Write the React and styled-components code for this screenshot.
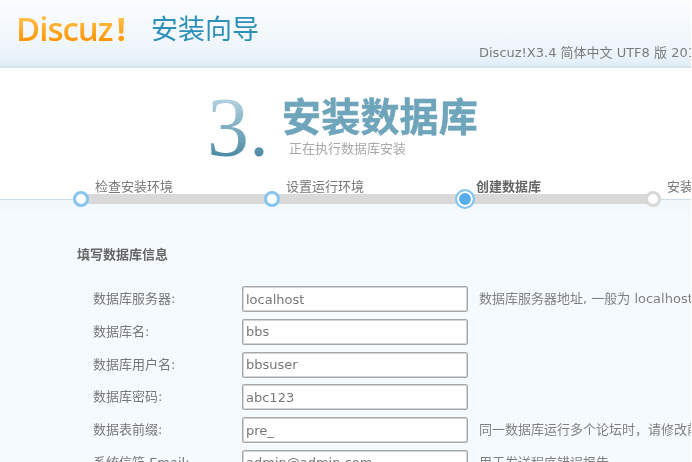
import styled, { createGlobalStyle } from "styled-components";

const GlobalStyle = createGlobalStyle`
  html, body {
    margin: 0;
    padding: 0;
    background: #fff;
  }
`;

const FONT = `"DejaVu Sans", "Noto Sans CJK SC", sans-serif`;
const CJK = `"Noto Sans CJK SC", sans-serif`;

const Page = styled.div`
  width: 691px;
  height: 462px;
  overflow: hidden;
  font-family: ${FONT};
  font-size: 13px;
  color: #777;
  background: #f5faff;
  filter: blur(0.4px);
`;

const Header = styled.header`
  height: 68px;
  box-sizing: border-box;
  display: flex;
  align-items: flex-start;
  white-space: nowrap;
  background: linear-gradient(#fbfdff 0%, #f3f8fd 50%, #ebf3fa 85%, #e0edf6 100%);
  border-bottom: 2px solid #d5e4ec;
`;

const Logo = styled.div`
  display: flex;
  width: 111px;
  flex: none;
  margin: 8px 0 0 16px;
  font-family: "Open Sans", Arial, sans-serif;
  font-weight: 600;
  font-size: 33px;
  line-height: 42px;
  letter-spacing: -1px;
  color: transparent;
  background: linear-gradient(#ffc14a 20%, #ff9400 80%);
  -webkit-background-clip: text;
  background-clip: text;
`;

const LogoBang = styled.span`
  margin-left: 4px;
  font-weight: 700;
`;

const LogoDivider = styled.div`
  width: 1px;
  height: 28px;
  margin: 14px 12px 0 12px;
  background: #dde5ea;
`;

const WizardName = styled.div`
  margin-top: 8px;
  font-family: ${CJK};
  font-size: 27px;
  line-height: 40px;
  color: #2c90b9;
`;

const Version = styled.div`
  margin: 44px 0 0 220px;
  font-size: 13px;
  line-height: 18px;
  color: #7b7b7b;
`;

const Hero = styled.section`
  height: 100px;
  box-sizing: border-box;
  display: flex;
  padding: 18px 0 0 207px;
  background: #fff;
`;

const StepNumber = styled.div`
  width: 75px;
  flex: none;
  font-family: "Liberation Serif", "Times New Roman", serif;
  font-size: 84px;
  line-height: 84px;
  color: transparent;
  background: linear-gradient(#b5d3e0 15%, #4f8ba5 85%);
  -webkit-background-clip: text;
  background-clip: text;
`;

const NumberDot = styled.span`
  margin-left: 3px;
  font-size: 56px;
  font-weight: 700;
`;

const HeroText = styled.div`
  margin-top: 3px;
`;

const HeroTitle = styled.h1`
  margin: 0;
  font-family: ${CJK};
  font-size: 39px;
  line-height: 50px;
  letter-spacing: 0.2px;
  font-weight: 700;
  color: #6fa5ba;
  -webkit-text-stroke: 0.5px #6fa5ba;
`;

const HeroSub = styled.div`
  margin: 0 0 0 7px;
  font-family: ${CJK};
  font-size: 13px;
  line-height: 18px;
  color: #a9a9a9;
`;

const Steps = styled.ol`
  list-style: none;
  margin: 0;
  padding: 0 0 0 81px;
  display: flex;
  white-space: nowrap;
  background: linear-gradient(#fff 0, #fff 31px, #f1f8fc 31px, #f5faff 60px);
  position: relative;

  &::before {
    content: "";
    position: absolute;
    left: 0;
    right: 0;
    top: 31px;
    height: 1px;
    background: #c7deec;
  }
`;

const Step = styled.li`
  position: relative;
  width: ${(p) => p.$width}px;
  height: 43px;
  flex: none;
`;

const StepLabel = styled.span`
  display: block;
  padding-left: ${(p) => p.$indent}px;
  font-family: ${CJK};
  font-size: 13px;
  line-height: 18px;
  padding-top: 9px;
  font-weight: ${(p) => (p.$current ? 700 : 400)};
  color: ${(p) => (p.$current ? "#666" : "#777")};
`;

const StepBar = styled.div`
  position: absolute;
  left: 0;
  right: 0;
  top: 26px;
  height: 10px;
  background: #d9d9d9;
`;

const StepDot = styled.span`
  position: absolute;
  z-index: 1;
  box-sizing: border-box;
  left: ${(p) => (p.$current ? -10 : -8)}px;
  top: ${(p) => (p.$current ? 21 : 23)}px;
  width: ${(p) => (p.$current ? 20 : 16)}px;
  height: ${(p) => (p.$current ? 20 : 16)}px;
  border-radius: 50%;
  border: ${(p) => (p.$current ? 2 : 3)}px solid ${(p) => (p.$todo ? "#d8d8d8" : "#85c5f0")};
  background: ${(p) => (p.$current ? "#56adec" : "#fff")};
  box-shadow: ${(p) => (p.$current ? "inset 0 0 0 2px #fff" : "none")};
`;

const Content = styled.main`
  padding: 33px 0 0 77px;
`;

const SectionTitle = styled.h2`
  margin: 0;
  font-family: ${CJK};
  font-size: 13px;
  line-height: 20px;
  font-weight: 700;
  color: #666;
`;

const Form = styled.div`
  margin-top: 22px;
  padding-left: 16px;
`;

const Row = styled.div`
  display: flex;
  align-items: flex-start;
  height: 32.75px;
  white-space: nowrap;
`;

const RowLabel = styled.label`
  width: 149px;
  flex: none;
  line-height: 26px;
  color: #777;
`;

const TextInput = styled.input`
  width: 226px;
  height: 26px;
  flex: none;
  box-sizing: border-box;
  margin: 0;
  padding: 0 3px;
  font-family: ${FONT};
  font-size: 13px;
  color: #777;
  background: #fff;
  border: 1px solid #a8a8a8;
  border-radius: 2px;
  box-shadow: inset 0 0 0 1px #d4d4d4;
  outline: none;
`;

const Hint = styled.span`
  margin-left: 11px;
  line-height: 26px;
  color: #808080;
`;

const STEPS = [
  { label: "检查安装环境", width: 191, indent: 14 },
  { label: "设置运行环境", width: 193, indent: 14 },
  { label: "创建数据库", width: 188, indent: 11, current: true },
  { label: "安装", width: 40, indent: 14, todo: true },
];

const FIELDS = [
  { label: "数据库服务器:", value: "localhost", hint: "数据库服务器地址, 一般为 localhost" },
  { label: "数据库名:", value: "bbs" },
  { label: "数据库用户名:", value: "bbsuser" },
  { label: "数据库密码:", value: "abc123" },
  { label: "数据表前缀:", value: "pre_", hint: "同一数据库运行多个论坛时，请修改前缀" },
  { label: "系统信箱 Email:", value: "admin@admin.com", hint: "用于发送程序错误报告" },
];

export default function App() {
  return (
    <Page>
      <GlobalStyle />
      <Header>
        <Logo>Discuz<LogoBang>!</LogoBang></Logo>
        <LogoDivider />
        <WizardName>安装向导</WizardName>
        <Version>Discuz!X3.4 简体中文 UTF8 版 20180101</Version>
      </Header>
      <Hero>
        <StepNumber>3<NumberDot>.</NumberDot></StepNumber>
        <HeroText>
          <HeroTitle>安装数据库</HeroTitle>
          <HeroSub>正在执行数据库安装</HeroSub>
        </HeroText>
      </Hero>
      <Steps>
        {STEPS.map((s) => (
          <Step key={s.label} $width={s.width}>
            {!s.todo && <StepBar />}
            <StepDot $current={s.current} $todo={s.todo} />
            <StepLabel $indent={s.indent} $current={s.current}>{s.label}</StepLabel>
          </Step>
        ))}
      </Steps>
      <Content>
        <SectionTitle>填写数据库信息</SectionTitle>
        <Form>
          {FIELDS.map((f) => (
            <Row key={f.label}>
              <RowLabel>{f.label}</RowLabel>
              <TextInput defaultValue={f.value} />
              {f.hint && <Hint>{f.hint}</Hint>}
            </Row>
          ))}
        </Form>
      </Content>
    </Page>
  );
}
